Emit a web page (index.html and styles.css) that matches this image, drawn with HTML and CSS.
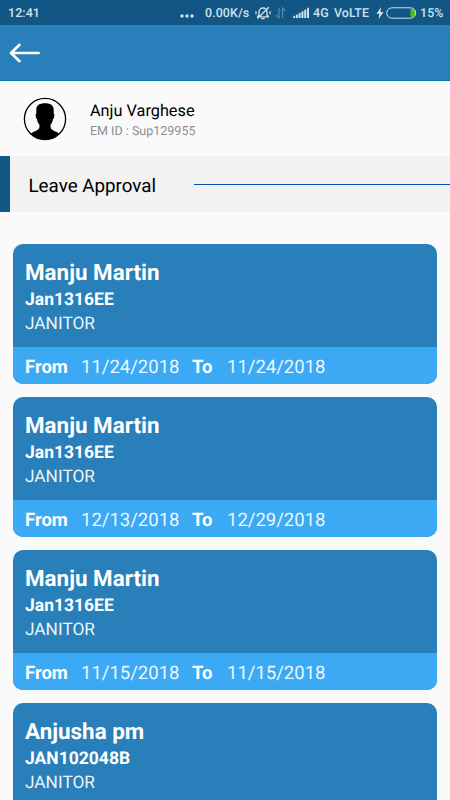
FILE: index.html
```html
<!DOCTYPE html>
<html lang="en">
<head>
<meta charset="utf-8">
<title>Leave Approval</title>
<link rel="stylesheet" href="styles.css">
</head>
<body>
<div class="status">
  <span class="clock">12:41</span>
  <svg class="dots" width="14" height="4" viewBox="0 0 14 4"><circle cx="2" cy="2" r="1.7"/><circle cx="7" cy="2" r="1.7"/><circle cx="12" cy="2" r="1.7"/></svg>
  <span class="speed">0.00K/s</span>
  <svg class="bell" width="16" height="14" viewBox="0 0 16 14"><path d="M2 10.800h12M4 10.500V6a3.900 3.900 0 0 1 8 0V10.500M6.200 12.700h3.600M2.500 12.500L13.800 1.200M1 8.200V5.200M15 8.200V5.200M2.300 10.800l1.700-2M13.700 10.800l-1.700-2"/></svg>
  <svg class="data" width="12" height="12" viewBox="0 0 12 12"><path d="M4 1v10L1 8M7.500 11V1l3 3"/></svg>
  <svg class="signal" width="16" height="11" viewBox="0 0 16 11"><path d="M0 11V9.800L2 8.600V11zM2.800 11V8.200l2-1.200v4zM5.600 11V6.600l2-1.200V11zM8.400 11V5l2-1.200V11zM11.200 11V3.200l2-1.200v9zM14 11V1.500L16 .2V11z"/></svg>
  <span class="network">4G</span>
  <span class="volte">VoLTE</span>
  <svg class="bolt" width="8" height="12" viewBox="0 0 8 12"><path d="M5 0L.5 6.800h2.800L2.700 12 7.500 5H4.400z"/></svg>
  <svg class="battery" width="31" height="12" viewBox="0 0 31 12"><path class="charge" d="M24.500 2h1a4 4 0 0 1 0 8h-1z"/><rect x=".7" y=".8" width="29" height="10.400" rx="5.200"/></svg>
  <span class="percent">15%</span>
</div>
<header class="toolbar">
  <svg width="32" height="20" viewBox="0 0 32 20"><path d="M29.700 10H2M10.500 1.800L2 10l8.500 8.200"/></svg>
</header>
<section class="profile">
  <svg class="avatar" width="44" height="44" viewBox="0 0 44 44">
    <circle cx="22" cy="22" r="20.600"/>
    <path d="M22 6.300c-5.400 0-8.700 2-8.700 6.200v4.200c-.9.2-.8 1.300-.5 2.800.2 1.400.5 2.400 1.200 2.500.3 2.500 1.200 4.300 2.400 5.600v3c0 2.300-4.700 3.500-8.800 6.100C11.200 40.700 16 42.600 22 42.600s10.800-1.900 14.400-5.900c-4.100-2.600-8.800-3.800-8.800-6.100v-3c1.200-1.300 2.100-3.100 2.400-5.600.7-.1 1-1.100 1.200-2.500.3-1.500.4-2.600-.5-2.800v-4.200c0-4.200-3.300-6.200-8.700-6.200z"/>
  </svg>
  <div class="person">
    <div class="person-name">Anju Varghese</div>
    <div class="person-id">EM ID : Sup129955</div>
  </div>
</section>
<div class="heading">
  <h1>Leave Approval</h1>
  <div class="rule"></div>
</div>
<main class="list">
  <article class="card">
    <div class="info"><h2>Manju Martin</h2><div class="code">Jan1316EE</div><div class="role">JANITOR</div></div>
    <div class="dates"><b class="from">From</b><span class="start">11/24/2018</span><b class="to">To</b><span>11/24/2018</span></div>
  </article>
  <article class="card">
    <div class="info"><h2>Manju Martin</h2><div class="code">Jan1316EE</div><div class="role">JANITOR</div></div>
    <div class="dates"><b class="from">From</b><span class="start">12/13/2018</span><b class="to">To</b><span>12/29/2018</span></div>
  </article>
  <article class="card">
    <div class="info"><h2>Manju Martin</h2><div class="code">Jan1316EE</div><div class="role">JANITOR</div></div>
    <div class="dates"><b class="from">From</b><span class="start">11/15/2018</span><b class="to">To</b><span>11/15/2018</span></div>
  </article>
  <article class="card last">
    <div class="info"><h2>Anjusha pm</h2><div class="code">JAN102048B</div><div class="role">JANITOR</div></div>
  </article>
</main>
</body>
</html>
```
FILE: styles.css
```css
* { box-sizing: border-box; }
body {
  margin: 0;
  height: 800px;
  overflow: hidden;
  display: flex;
  flex-direction: column;
  background: #fafafa;
  font-family: Roboto, "Liberation Sans", sans-serif;
  color: #000;
  text-rendering: geometricPrecision;
}
svg { display: block; flex: none; fill: none; }
.status, .toolbar, .profile, .heading { flex: none; }
.status {
  height: 25px;
  padding-left: 8px;
  display: flex;
  align-items: center;
  background: #115684;
  color: #d3e2ee;
  font-size: 12.4px;
  font-weight: 500;
  letter-spacing: .1px;
  white-space: nowrap;
}
.status span { flex: none; line-height: 15px; padding-top: 1px; }
.clock { width: 172px; }
.dots { fill: #d3e2ee; margin-top: 6px; }
.speed { width: 45px; margin-left: 11px; }
.bell { margin-left: 5px; stroke: #d3e2ee; stroke-width: 1.3; }
.data { margin-left: 4px; stroke: #5687a8; stroke-width: 1.3; }
.signal { margin-left: 6px; fill: #d3e2ee; }
.network { width: 16px; margin-left: 4px; }
.volte { width: 37px; margin-left: 5px; }
.bolt { margin-left: 5px; fill: #d3e2ee; }
.battery { margin-left: 2px; stroke: #d3e2ee; stroke-width: 1; }
.charge { fill: #43c40d; stroke: none; }
.percent { margin-left: 3px; }
.toolbar {
  height: 56px;
  padding: 1px 0 0 9px;
  display: flex;
  align-items: center;
  background: #287fb9;
  border-bottom: 1px solid #0875b5;
}
.toolbar svg { stroke: #fff; stroke-width: 2.6; stroke-linecap: round; stroke-linejoin: round; }
.profile { height: 75px; padding-left: 23px; display: flex; align-items: center; }
.avatar circle { stroke: #000; stroke-width: 1.3; }
.avatar path { fill: #000; }
.person { margin-left: 23px; padding-top: 5px; }
.person-name { font-size: 16.3px; line-height: 22px; }
.person-id { font-size: 12.5px; line-height: 20px; color: #8e8e8e; }
.heading {
  height: 56px;
  padding-left: 18.5px;
  display: flex;
  align-items: center;
  background: #f2f2f2;
  border-left: 10px solid #115684;
}
h1 { width: 165.5px; margin: 0; padding-top: 3px; font-size: 18.8px; line-height: 24px; font-weight: 400; }
.rule { flex: 1; height: 1px; background: #0751a8; }
.list {
  flex: 1;
  min-height: 0;
  padding: 32px 13px 0;
  display: flex;
  flex-direction: column;
  gap: 13px;
  overflow: hidden;
}
.card { flex: none; height: 140px; border-radius: 10px; overflow: hidden; background: #287fb9; color: #fff; }
.card.last { flex: 1; border-radius: 10px 10px 0 0; }
.info { height: 103px; padding: 15px 0 0 12px; }
.last .info { height: auto; }
h2 { margin: 0; font-size: 22.4px; line-height: 28px; font-weight: 700; }
.code { font-size: 17.5px; line-height: 26px; font-weight: 700; }
.role { font-size: 17.3px; line-height: 23px; color: #edf5fa; }
.dates {
  height: 37px;
  padding: 2px 0 0 12px;
  display: flex;
  align-items: center;
  background: #3ba9f4;
  font-size: 18.5px;
}
.dates span { color: #edf6fd; }
.from { width: 56px; }
.start { width: 111px; }
.to { width: 35px; }
```
